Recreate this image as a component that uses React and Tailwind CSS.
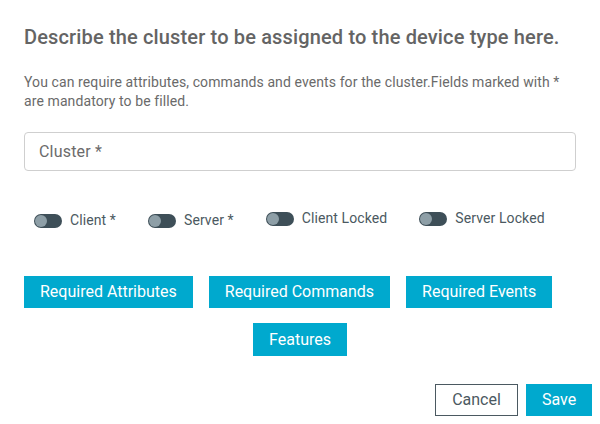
import React from "react";

function Toggle({ label, lower }) {
	return (
		<label className={`flex items-center gap-2 ${lower ? "mt-[2px]" : ""}`}>
			<span className="relative w-[28px] h-[14px] rounded-full bg-[#3e4f58] shrink-0">
				<span className="absolute left-[1px] top-[1px] w-[12px] h-[12px] rounded-full bg-[#8e9fa7]" />
			</span>
			<span className="text-[14px] tracking-[0.1px] text-[#4b5961]">{label}</span>
		</label>
	);
}

export default function App() {
	return (
		<div
			className="w-[600px] h-[424px] bg-white px-6 pt-[25px]"
			style={{ fontFamily: "Roboto, 'Liberation Sans', sans-serif" }}
		>
			{/* Title */}
			<h1 className="text-[20px] leading-[24px] font-medium tracking-[0.15px] text-[#646464]">
				Describe the cluster to be assigned to the device type here.
			</h1>

			{/* Description */}
			<p className="mt-[24px] text-[14px] leading-[19px] tracking-[0.1px] text-[#6a6a6a]">
				You can require attributes, commands and events for the cluster.Fields
				marked with * are mandatory to be filled.
			</p>

			{/* Cluster input */}
			<div className="mt-[21px] h-[39px] border border-[#cfcfcf] rounded-[4px] flex items-center px-[14px]">
				<span className="text-[16px] tracking-[0.2px] text-[#6b6b6b]">Cluster *</span>
			</div>

			{/* Toggles */}
			<div className="mt-[37px] flex items-start gap-[32px] pl-[10px]">
				<Toggle label="Client *" lower />
				<Toggle label="Server *" lower />
				<Toggle label="Client Locked" />
				<Toggle label="Server Locked" />
			</div>

			{/* Required buttons */}
			<div className="mt-[45px] flex gap-4">
				<button className="h-[32px] px-4 bg-[#00a9ce] text-white text-[16px]">
					Required Attributes
				</button>
				<button className="h-[32px] px-4 bg-[#00a9ce] text-white text-[16px]">
					Required Commands
				</button>
				<button className="h-[32px] px-4 bg-[#00a9ce] text-white text-[16px]">
					Required Events
				</button>
			</div>
			<div className="mt-[15px] flex justify-center">
				<button className="h-[33px] px-4 bg-[#00a9ce] text-white text-[16px]">
					Features
				</button>
			</div>

			{/* Footer */}
			<div className="mt-[28px] flex justify-end gap-2 -mr-4">
				<button className="h-[32px] w-[83px] border border-[#4b5961] text-[#4b5961] text-[16px]">
					Cancel
				</button>
				<button className="h-[32px] w-[66px] bg-[#00a9ce] text-white text-[16px]">
					Save
				</button>
			</div>
		</div>
	);
}
